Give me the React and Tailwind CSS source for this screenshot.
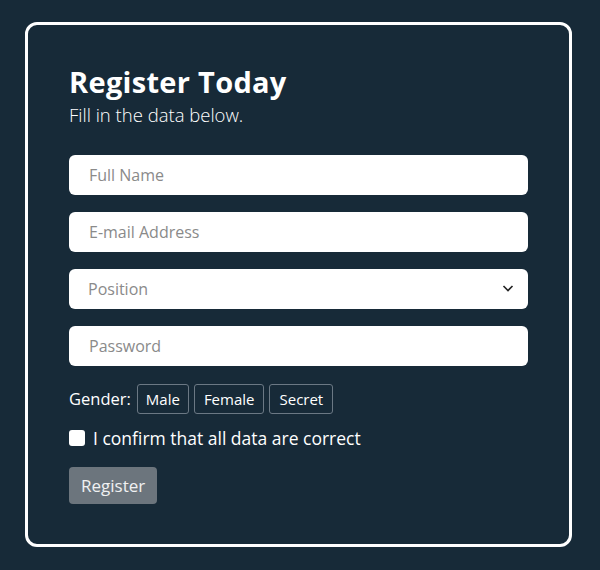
import React from "react";

export default function App() {
  return (
    <div className="min-h-[570px] w-full bg-[#172a38] pt-[22px] pl-[25px] font-['Open_Sans',sans-serif]">
      <div className="w-[547px] h-[525px] border-[3px] border-white rounded-[12px] px-[41px] pt-[40px]">
        {/* header */}
        <h1 className="text-[29px] leading-[34px] font-bold text-white tracking-[0.3px]">
          Register Today
        </h1>
        <p className="text-[18.5px] leading-[24px] text-white font-light mt-[4px]">
          Fill in the data below.
        </p>

        <form className="mt-[28px] flex flex-col gap-[17px] w-[459px]">
          <input
            type="text"
            placeholder="Full Name"
            className="h-[40px] rounded-[6px] bg-white px-[20px] text-[16px] text-gray-700 placeholder:text-[#8a8a8a] outline-none"
          />
          <input
            type="email"
            placeholder="E-mail Address"
            className="h-[40px] rounded-[6px] bg-white px-[20px] text-[16px] text-gray-700 placeholder:text-[#8a8a8a] outline-none"
          />
          <div className="relative">
            <select
              defaultValue=""
              className="w-full h-[40px] rounded-[6px] bg-white px-[19px] text-[16px] text-[#8a8a8a] appearance-none outline-none"
            >
              <option value="" disabled>
                Position
              </option>
              <option>Developer</option>
              <option>Designer</option>
            </select>
            <svg
              className="absolute right-[14px] top-[15px] pointer-events-none"
              width="12"
              height="9"
              viewBox="0 0 12 9"
              fill="none"
            >
              <path d="M1.5 2 L6 6.5 L10.5 2" stroke="#222" strokeWidth="1.6" />
            </svg>
          </div>
          <input
            type="password"
            placeholder="Password"
            className="h-[40px] rounded-[6px] bg-white px-[20px] text-[16px] text-gray-700 placeholder:text-[#8a8a8a] outline-none"
          />
        </form>

        {/* gender */}
        <div className="mt-[18px] flex items-center gap-[5px] text-white">
          <span className="text-[16.5px] mr-[1px]">Gender:</span>
          <button className="h-[30px] px-[8px] border border-[#6b7884] rounded-[3px] text-[15px]">
            Male
          </button>
          <button className="h-[30px] px-[9px] border border-[#6b7884] rounded-[3px] text-[15px]">
            Female
          </button>
          <button className="h-[30px] px-[9px] border border-[#6b7884] rounded-[3px] text-[15px]">
            Secret
          </button>
        </div>

        {/* confirm */}
        <label className="mt-[11px] flex items-center gap-[8px] text-white text-[17.5px]">
          <span className="w-[16px] h-[16px] bg-white rounded-[3px] inline-block" />
          I confirm that all data are correct
        </label>

        <button className="mt-[16px] h-[37px] px-[12px] rounded-[4px] bg-[#6c757d] text-white/90 text-[17px]">
          Register
        </button>
      </div>
    </div>
  );
}
